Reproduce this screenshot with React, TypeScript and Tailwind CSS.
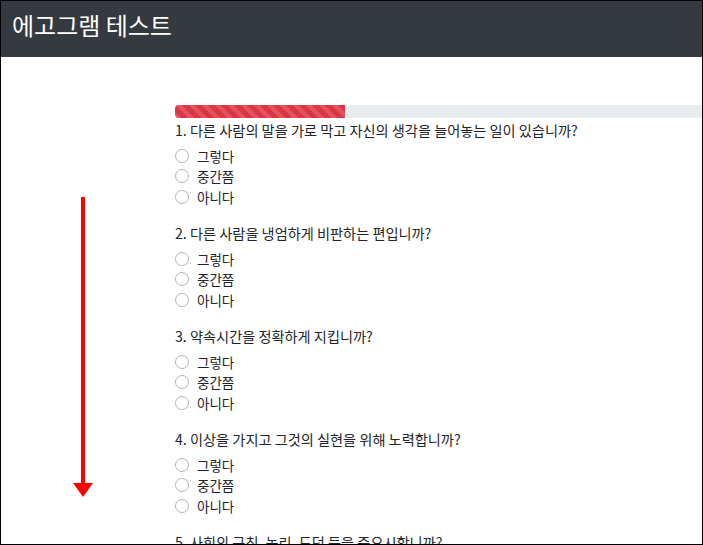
import React from "react";

const questions = [
  "1. 다른 사람의 말을 가로 막고 자신의 생각을 늘어놓는 일이 있습니까?",
  "2. 다른 사람을 냉엄하게 비판하는 편입니까?",
  "3. 약속시간을 정확하게 지킵니까?",
  "4. 이상을 가지고 그것의 실현을 위해 노력합니까?",
  "5. 사회의 규칙, 논리, 도덕 등을 중요시합니까?",
];

const options = ["그렇다", "중간쯤", "아니다"];

const font = { fontFamily: '"Noto Sans CJK KR", "Noto Sans", sans-serif' };

export default function App() {
  return (
    <div className="w-[703px] h-[545px] bg-white">
      <div
        className="relative w-[703px] h-[545px] overflow-hidden border border-black bg-white text-[#212529]"
        style={font}
      >
        <header className="h-[56px] bg-[#343a40] flex items-center pl-[11px]">
          <h1 className="text-[24px] leading-none text-white font-normal pb-[9px]">
            에고그램 테스트
          </h1>
        </header>
        <main className="pl-[174px] pt-[48px]">
          <div className="w-[700px] h-[13px] rounded-[4px] bg-[#e9ecef] overflow-hidden">
            <div className="h-full w-[170px] bg-[#dc3545] bg-[linear-gradient(45deg,rgba(255,255,255,.15)_25%,transparent_25%,transparent_50%,rgba(255,255,255,.15)_50%,rgba(255,255,255,.15)_75%,transparent_75%,transparent)] bg-[length:13px_13px]" />
          </div>
          <div className="mt-[1.5px] flex flex-col gap-[15.5px]">
            {questions.map((q, i) => (
              <div key={i}>
                <p className="text-[14.2px] leading-[20px] whitespace-nowrap mb-[6px]">{q}</p>
                <div className="flex flex-col">
                  {options.map((o) => (
                    <label key={o} className="flex items-center h-[20.5px] text-[13.5px]">
                      <span className="w-[14px] h-[14px] rounded-full border border-[#b5b5b5] bg-white shrink-0" />
                      <span className="ml-[8px]">{o}</span>
                    </label>
                  ))}
                </div>
              </div>
            ))}
          </div>
        </main>
        <div className="absolute left-[71.5px] top-[196px] flex flex-col items-center">
          <div className="w-[4px] h-[286px] bg-[#ff0000]" />
          <div className="w-0 h-0 border-l-[10px] border-r-[10px] border-t-[14px] border-l-transparent border-r-transparent border-t-[#ff0000]" />
        </div>
      </div>
    </div>
  );
}
